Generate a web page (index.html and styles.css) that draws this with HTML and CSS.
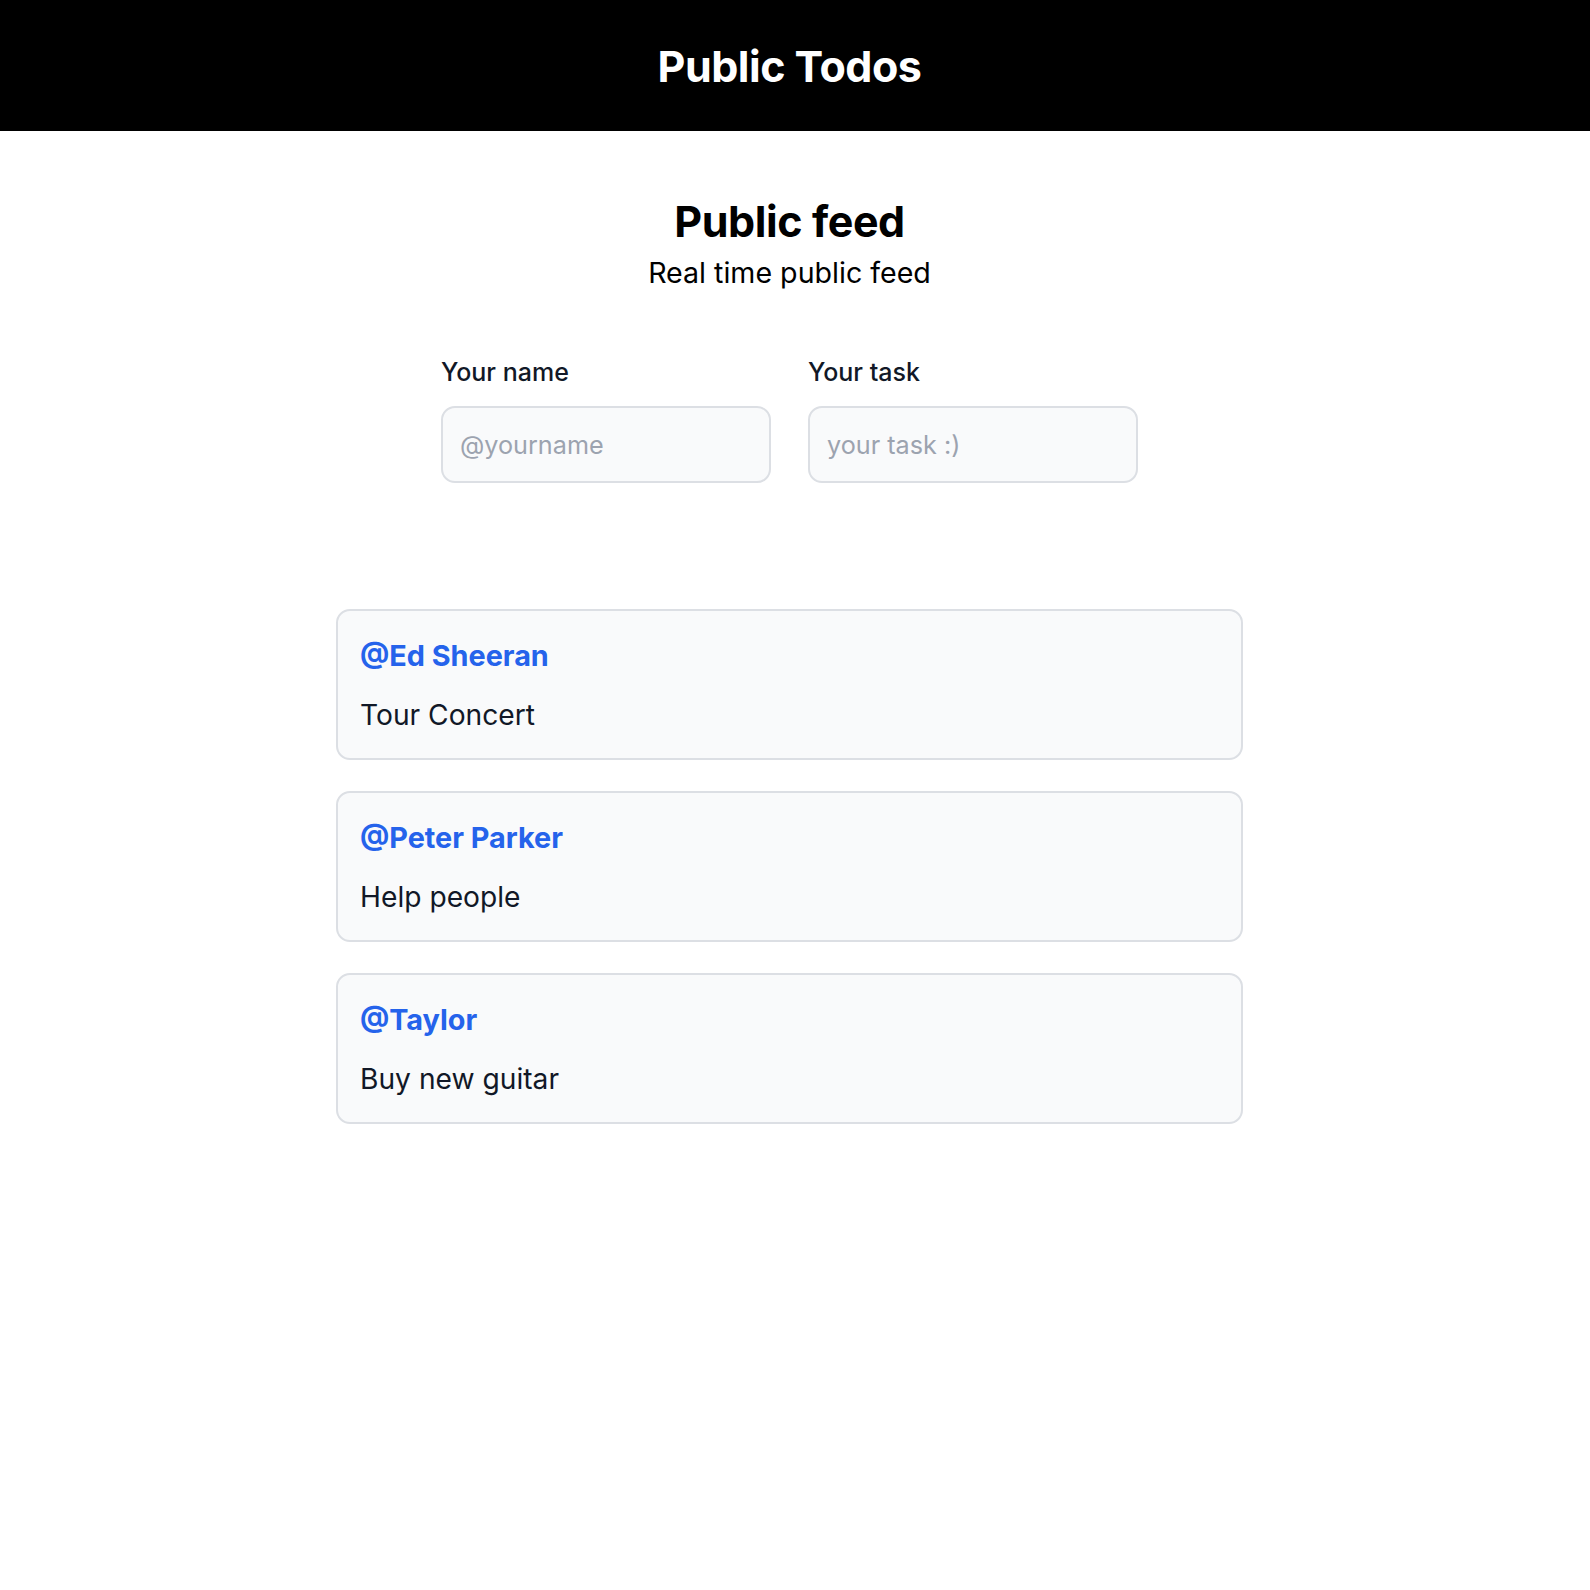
FILE: index.html
```html
<!DOCTYPE html>
<html lang="en">
<head>
<meta charset="utf-8">
<title>Public Todos</title>
<link rel="stylesheet" href="styles.css">
</head>
<body>
<header class="topbar">
  <h1 class="brand">Public Todos</h1>
</header>
<main class="page">
  <section class="intro">
    <h2 class="title">Public feed</h2>
    <p class="subtitle">Real time public feed</p>
  </section>
  <form class="entry">
    <label class="field">
      <span class="field-label">Your name</span>
      <input class="field-input" type="text" placeholder="@yourname">
    </label>
    <label class="field">
      <span class="field-label">Your task</span>
      <input class="field-input" type="text" placeholder="your task :)">
    </label>
  </form>
  <ul class="feed">
    <li class="card">
      <div class="card-user">@Ed Sheeran</div>
      <div class="card-task">Tour Concert</div>
    </li>
    <li class="card">
      <div class="card-user">@Peter Parker</div>
      <div class="card-task">Help people</div>
    </li>
    <li class="card">
      <div class="card-user">@Taylor</div>
      <div class="card-task">Buy new guitar</div>
    </li>
  </ul>
</main>
</body>
</html>
```

FILE: styles.css
```css
* { box-sizing: border-box; }
html, body { margin: 0; padding: 0; background: #ffffff; }
body {
  font-family: Inter, "Noto Sans", "Liberation Sans", sans-serif;
  color: #111827;
}
.topbar {
  height: 131px;
  background: #000000;
  display: flex;
  align-items: center;
  justify-content: center;
  padding-right: 11px;
}
.brand {
  margin: 0;
  color: #ffffff;
  font-size: 43px;
  font-weight: 700;
  line-height: 52px;
  letter-spacing: -0.5px;
}
.page {
  display: flex;
  flex-direction: column;
  align-items: center;
  padding: 64px 11px 40px 0;
}
.intro { text-align: center; }
.title {
  margin: 0;
  font-size: 43px;
  font-weight: 700;
  line-height: 52px;
  color: #000000;
  letter-spacing: -0.4px;
}
.subtitle {
  margin: 8px 0 0;
  font-size: 28.6px;
  line-height: 36px;
  color: #000000;
}
.entry {
  margin-top: 66px;
  display: flex;
  gap: 37px;
}
.field {
  display: flex;
  flex-direction: column;
  gap: 19px;
  width: 330px;
}
.field-label {
  font-size: 25px;
  font-weight: 500;
  line-height: 30px;
  color: #111827;
}
.field-input {
  height: 77px;
  width: 100%;
  border: 2px solid #dcdfe4;
  border-radius: 14px;
  background: #f9fafb;
  padding: 0 17px;
  font-family: inherit;
  font-size: 25.2px;
  color: #111827;
  outline: none;
}
.field-input::placeholder { color: #9ca3af; }
.feed {
  list-style: none;
  margin: 126px 0 0;
  padding: 0;
  width: 907px;
  display: flex;
  flex-direction: column;
  gap: 31px;
}
.card {
  border: 2px solid #dcdfe4;
  border-radius: 14px;
  background: #f9fafb;
  padding: 27px 22px 25px;
  display: flex;
  flex-direction: column;
  gap: 23px;
}
.card-user {
  font-size: 28.8px;
  font-weight: 700;
  line-height: 36px;
  color: #2563eb;
}
.card-task {
  font-size: 28.2px;
  line-height: 36px;
  color: #111827;
}
```
